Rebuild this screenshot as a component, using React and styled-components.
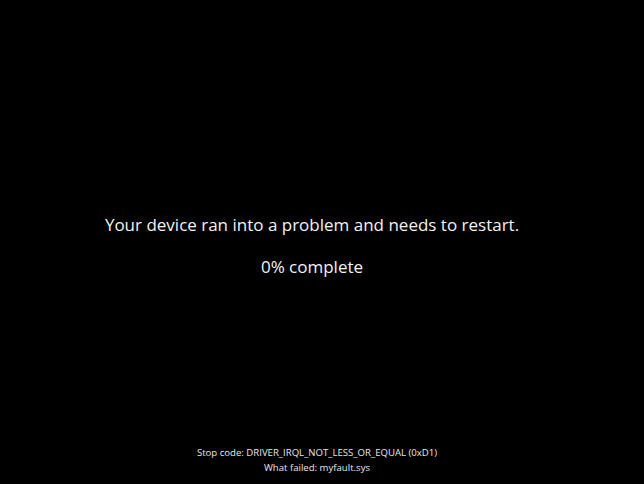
import React from 'react'
import styled, { createGlobalStyle } from 'styled-components'

const Global = createGlobalStyle`
  html, body { margin: 0; padding: 0; background: #000; }
  body { font-family: "Open Sans", "Noto Sans", sans-serif; }
`

const Screen = styled.div`
  display: flex;
  flex-direction: column;
  width: 100vw;
  height: 100vh;
  background: #000;
  color: #f2f2f2;
  overflow: hidden;
`

const Main = styled.div`
  flex: 1;
  display: flex;
  flex-direction: column;
  align-items: center;
  justify-content: center;
  padding-top: 47px;
  padding-right: 20px;
`

const Headline = styled.div`
  font-size: 17px;
  line-height: 24px;
`

const Progress = styled.div`
  font-size: 17px;
  line-height: 24px;
  margin-top: 18px;
`

const Footer = styled.div`
  display: flex;
  flex-direction: column;
  align-items: center;
  padding-bottom: 9px;
  padding-right: 10px;
  font-size: 9.6px;
  line-height: 15px;
  color: #e6e6e6;
`

export default function App() {
  return (
    <>
      <Global />
      <Screen>
        <Main>
          <Headline>Your device ran into a problem and needs to restart.</Headline>
          <Progress>0% complete</Progress>
        </Main>
        <Footer>
          <div>Stop code: DRIVER_IRQL_NOT_LESS_OR_EQUAL (0xD1)</div>
          <div>What failed: myfault.sys</div>
        </Footer>
      </Screen>
    </>
  )
}
